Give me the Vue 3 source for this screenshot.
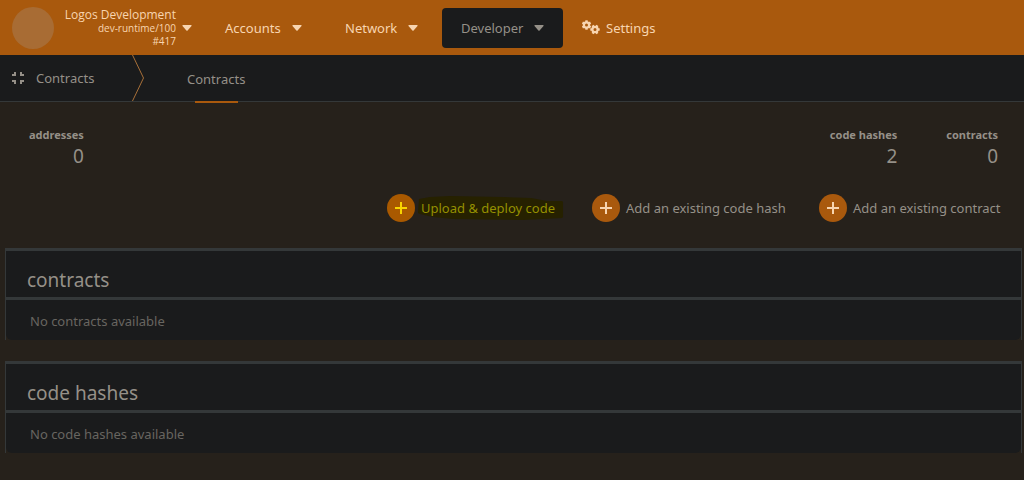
<script setup>
const menus = [
  { name: 'Accounts', active: false },
  { name: 'Network', active: false },
  { name: 'Developer', active: true },
]
const counts = [
  { label: 'code hashes', value: 2 },
  { label: 'contracts', value: 0 },
]
const actions = [
  { label: 'Upload & deploy code', marked: true },
  { label: 'Add an existing code hash', marked: false },
  { label: 'Add an existing contract', marked: false },
]
const tables = [
  { title: 'contracts', empty: 'No contracts available' },
  { title: 'code hashes', empty: 'No code hashes available' },
]
const teeth = [0, 60, 120, 180, 240, 300]
</script>

<template>
  <div class="page">
    <header class="topbar">
      <button class="chain" type="button">
        <span class="logo"></span>
        <span class="chain-info">
          <span class="chain-name">Logos Development</span>
          <span>dev-runtime/100</span>
          <span>#417</span>
        </span>
        <svg class="caret" viewBox="0 0 10 6" aria-hidden="true"><path d="M1 0h8q1 0 .5 1L5.600 5.500q-.6.600-1.200 0L.5 1Q0 0 1 0z" /></svg>
      </button>
      <nav class="menu">
        <button v-for="m in menus" :key="m.name" type="button" class="menu-item" :class="{ active: m.active }">
          {{ m.name }}
          <svg class="caret" viewBox="0 0 10 6" aria-hidden="true"><path d="M1 0h8q1 0 .5 1L5.600 5.500q-.6.600-1.200 0L.5 1Q0 0 1 0z" /></svg>
        </button>
        <a class="settings" href="#settings">
          <svg class="cogs" viewBox="0 0 18 15" aria-hidden="true">
            <g transform="translate(4.500 5)">
              <circle r="2.600" fill="none" stroke="currentColor" stroke-width="2.200" />
              <rect v-for="a in teeth" :key="a" x="-1.200" y="-4.700" width="2.400" height="2" :transform="`rotate(${a})`" />
            </g>
            <g transform="translate(13 9.500)">
              <circle r="2.600" fill="none" stroke="currentColor" stroke-width="2.200" />
              <rect v-for="a in teeth" :key="a" x="-1.200" y="-4.700" width="2.400" height="2" :transform="`rotate(${a + 30})`" />
            </g>
          </svg>
          Settings
        </a>
      </nav>
    </header>

    <nav class="tabs">
      <div class="section">
        <svg class="compress" viewBox="0 0 12 12" aria-hidden="true"><path d="M3 0v3H0M9 0v3h3M3 12V9H0M9 12V9h3" /></svg>
        Contracts
      </div>
      <svg class="divider" viewBox="0 0 12 46" aria-hidden="true"><path d="M.5 0 11.500 23 .5 46" /></svg>
      <a class="tab" href="#contracts">Contracts</a>
    </nav>

    <main>
      <section class="summary">
        <dl class="stat">
          <dt>addresses</dt>
          <dd>0</dd>
        </dl>
        <div class="stat-group">
          <dl v-for="c in counts" :key="c.label" class="stat">
            <dt>{{ c.label }}</dt>
            <dd>{{ c.value }}</dd>
          </dl>
        </div>
      </section>

      <div class="actions">
        <button v-for="a in actions" :key="a.label" type="button" class="action" :class="{ marked: a.marked }">
          <span class="plus">
            <svg viewBox="0 0 12 12" aria-hidden="true"><path d="M6 0v12M0 6h12" /></svg>
          </span>
          <span class="action-label">
            <svg v-if="a.marked" class="highlight" viewBox="0 0 147 24" preserveAspectRatio="none" aria-hidden="true">
              <path d="M1 3 12 1 32 0l54 1 28 1 16 3 15 0 1 1v15l-1 1-20 1-20 1-70-1-20-2-13-3-2-1z" />
            </svg>
            <span>{{ a.label }}</span>
          </span>
        </button>
      </div>

      <table v-for="t in tables" :key="t.title">
        <thead>
          <tr><th scope="col">{{ t.title }}</th></tr>
        </thead>
        <tbody>
          <tr><td>{{ t.empty }}</td></tr>
        </tbody>
      </table>
    </main>
  </div>
</template>

<style>
body {
  margin: 0;
  background: #26211b;
}
</style>

<style scoped>
.page {
  min-height: 100vh;
  background: #26211b;
  color: #959088;
  font-family: "Noto Sans", "Open Sans", sans-serif;
  font-size: 13px;
  line-height: 20px;
}
button {
  border: 0;
  padding: 0;
  background: none;
  color: inherit;
  font: inherit;
  white-space: nowrap;
}
a {
  color: inherit;
  text-decoration: none;
}
.topbar {
  display: flex;
  align-items: center;
  height: 55px;
  padding-left: 12px;
  background: #a9590d;
  color: #f8d5b0;
}
.chain {
  display: flex;
  align-items: center;
  width: 180px;
  font-family: "Open Sans", "Noto Sans", sans-serif;
}
.logo {
  width: 42px;
  height: 42px;
  border-radius: 50%;
  background: #a86c34;
}
.chain-info {
  display: flex;
  flex: 1;
  flex-direction: column;
  align-items: flex-end;
  margin-right: 6px;
  font-size: 10px;
  line-height: 13px;
}
.chain-name {
  font-size: 12px;
  line-height: 14px;
}
.caret {
  width: 10px;
  height: 6px;
  fill: currentColor;
}
.menu {
  display: grid;
  grid-template-columns: 115px 111px 121px auto;
  align-items: center;
  gap: 5px;
  margin-left: 14px;
}
.menu-item {
  display: flex;
  align-items: center;
  justify-content: space-between;
  height: 40px;
  padding: 0 19px;
  border-radius: 4px;
}
.active {
  background: #1a1b1c;
  color: #959088;
}
.settings {
  display: flex;
  align-items: center;
  gap: 6px;
  margin-left: 14px;
}
.cogs {
  width: 18px;
  height: 15px;
  fill: currentColor;
}
.tabs {
  display: flex;
  height: 46px;
  border-bottom: 1px solid #343839;
  background: #1a1b1c;
}
.section {
  display: flex;
  align-items: center;
  gap: 12px;
  width: 120px;
  padding-left: 12px;
}
.compress {
  width: 12px;
  height: 12px;
  fill: none;
  stroke: currentColor;
  stroke-width: 2;
}
.divider {
  width: 12px;
  height: 46px;
  fill: none;
  stroke: #a87039;
}
.tab {
  position: relative;
  margin-left: 43px;
  line-height: 48px;
}
.tab::after {
  content: "";
  position: absolute;
  right: 7px;
  bottom: -2px;
  left: 8px;
  height: 2px;
  background: #a9590d;
}
main {
  padding: 24px 2px 24px 5px;
}
.summary {
  display: flex;
  justify-content: space-between;
  padding: 0 24px;
}
.stat-group {
  display: flex;
  gap: 49px;
}
.stat {
  margin: 0;
  text-align: right;
}
dt {
  font-size: 11px;
  font-weight: 700;
  line-height: 18px;
}
dd {
  margin: 0;
  font-size: 19px;
  line-height: 24px;
}
.actions {
  display: grid;
  grid-template-columns: 175px 197px 184px;
  justify-content: end;
  gap: 30px;
  margin: 26px 19px 26px 0;
}
.action {
  display: flex;
  align-items: center;
  gap: 6px;
}
.plus {
  display: grid;
  place-items: center;
  width: 28px;
  height: 28px;
  border-radius: 50%;
  background: #a9590d;
  color: #f8d5b0;
}
.plus svg {
  width: 12px;
  height: 12px;
  stroke: currentColor;
  stroke-width: 2;
}
.action-label {
  position: relative;
}
.action-label span {
  position: relative;
}
.highlight {
  position: absolute;
  top: -2px;
  left: -3px;
  width: calc(100% + 12px);
  height: 24px;
  fill: #262100;
}
.marked {
  color: #959000;
}
.marked .plus {
  background: #a95900;
  color: #f8d500;
}
table {
  width: 100%;
  margin-bottom: 21px;
  border-right: 1px solid #343839;
  border-left: 1px solid #343839;
  border-spacing: 0;
}
th,
td {
  border-top: 3px solid #343839;
  background: #1a1b1c;
  text-align: left;
}
th {
  padding: 16px 21px 4px;
  font-size: 19px;
  font-weight: 400;
  line-height: 26px;
}
td {
  padding: 11px 24px 9px;
  border-radius: 0 0 6px 6px;
  color: #686560;
}
</style>
